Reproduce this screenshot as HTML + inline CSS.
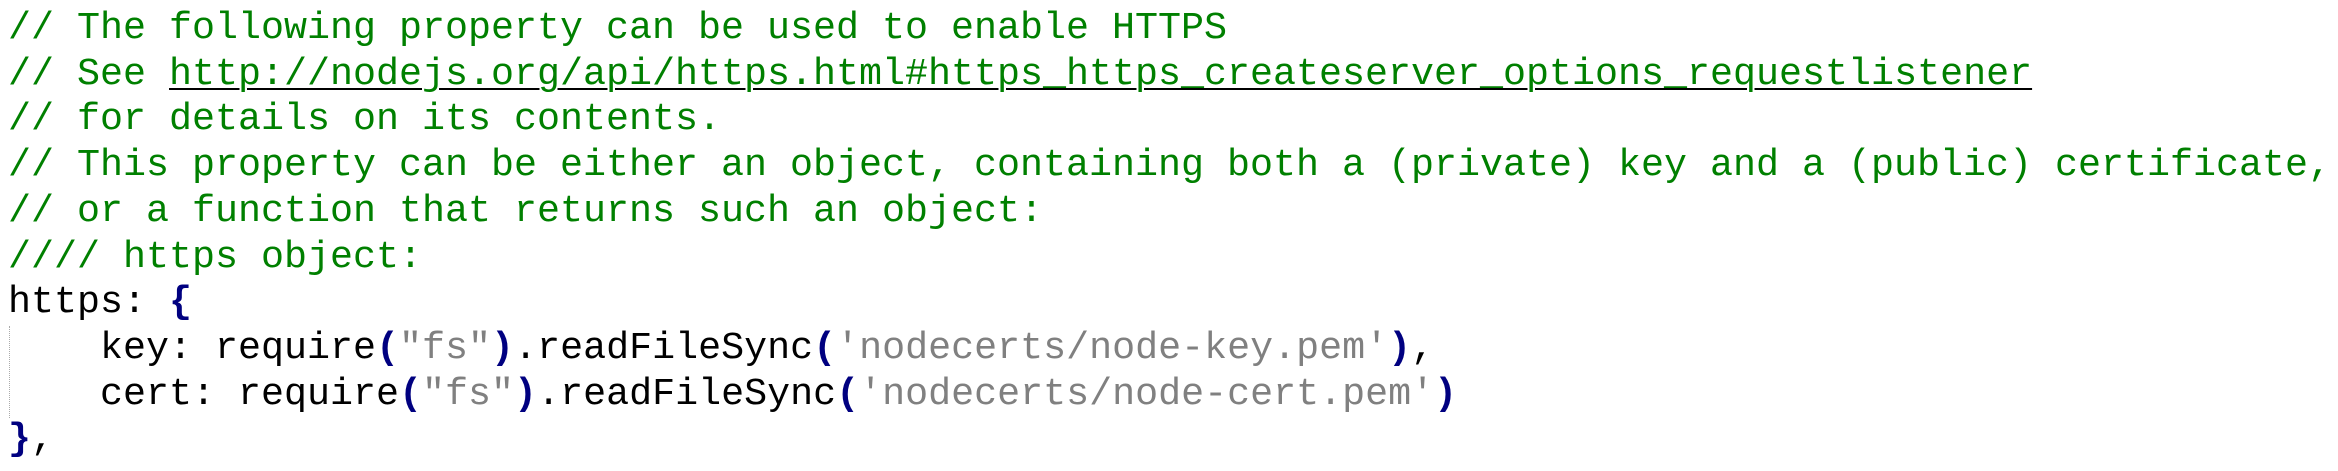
<!DOCTYPE html>
<html><head><meta charset="utf-8"><style>
html,body{margin:0;padding:0;background:#fff;width:2338px;height:471px;overflow:hidden}
pre{margin:0;padding:6px 0 0 8px;font-family:"Liberation Mono","Courier New",monospace;font-size:38.33px;line-height:45.7px;color:#000;white-space:pre;position:relative}
.c{color:#008000}
.u{text-decoration:underline;text-decoration-color:#000;text-decoration-thickness:2px;text-underline-offset:4px}
.b{color:#000080;font-weight:bold}
.s{color:#808080}
.g{position:absolute;left:9px;top:326px;height:92px;border-left:1px dotted #aaa}
</style></head><body>
<pre><span class="c">// The following property can be used to enable HTTPS
// See <span class="u">http://nodejs.org/api/https.html#https_https_createserver_options_requestlistener</span>
// for details on its contents.
// This property can be either an object, containing both a (private) key and a (public) certificate,
// or a function that returns such an object:
//// https object:</span>
https: <span class="b">{</span>
    key: require<span class="b">(</span><span class="s">"fs"</span><span class="b">)</span>.readFileSync<span class="b">(</span><span class="s">'nodecerts/node-key.pem'</span><span class="b">)</span>,
    cert: require<span class="b">(</span><span class="s">"fs"</span><span class="b">)</span>.readFileSync<span class="b">(</span><span class="s">'nodecerts/node-cert.pem'</span><span class="b">)</span>
<span class="b">}</span>,<div class="g"></div></pre>
</body></html>
